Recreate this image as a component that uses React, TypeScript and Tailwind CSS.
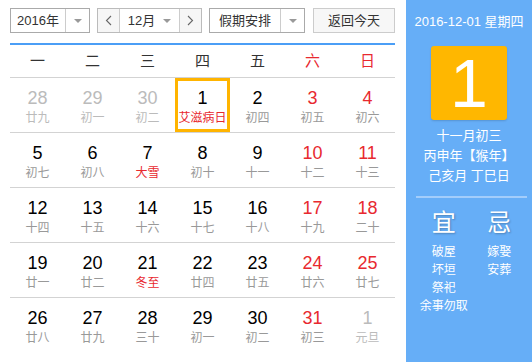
import React from "react";

type Day = {
  n: number;
  lunar: string;
  other?: boolean;
  weekend?: boolean;
  fest?: boolean;
  selected?: boolean;
};

const WEEKDAYS = ["一", "二", "三", "四", "五", "六", "日"];

const ROWS: Day[][] = [
  [
    { n: 28, lunar: "廿九", other: true },
    { n: 29, lunar: "初一", other: true },
    { n: 30, lunar: "初二", other: true },
    { n: 1, lunar: "艾滋病日", fest: true, selected: true },
    { n: 2, lunar: "初四" },
    { n: 3, lunar: "初五", weekend: true },
    { n: 4, lunar: "初六", weekend: true },
  ],
  [
    { n: 5, lunar: "初七" },
    { n: 6, lunar: "初八" },
    { n: 7, lunar: "大雪", fest: true },
    { n: 8, lunar: "初十" },
    { n: 9, lunar: "十一" },
    { n: 10, lunar: "十二", weekend: true },
    { n: 11, lunar: "十三", weekend: true },
  ],
  [
    { n: 12, lunar: "十四" },
    { n: 13, lunar: "十五" },
    { n: 14, lunar: "十六" },
    { n: 15, lunar: "十七" },
    { n: 16, lunar: "十八" },
    { n: 17, lunar: "十九", weekend: true },
    { n: 18, lunar: "二十", weekend: true },
  ],
  [
    { n: 19, lunar: "廿一" },
    { n: 20, lunar: "廿二" },
    { n: 21, lunar: "冬至", fest: true },
    { n: 22, lunar: "廿四" },
    { n: 23, lunar: "廿五" },
    { n: 24, lunar: "廿六", weekend: true },
    { n: 25, lunar: "廿七", weekend: true },
  ],
  [
    { n: 26, lunar: "廿八" },
    { n: 27, lunar: "廿九" },
    { n: 28, lunar: "三十" },
    { n: 29, lunar: "初一" },
    { n: 30, lunar: "初二" },
    { n: 31, lunar: "初三", weekend: true },
    { n: 1, lunar: "元旦", other: true },
  ],
];

function Caret() {
  return (
    <span className="w-0 h-0 border-x-[4px] border-x-transparent border-t-[4px] border-t-[#999]" />
  );
}

function DayCell({ d }: { d: Day }) {
  const numColor = d.other ? "text-[#bbb]" : d.weekend ? "text-[#e8292f]" : "text-black";
  const lunarColor = d.other ? "text-[#bbb]" : d.fest ? "text-[#e8292f]" : "text-[#999]";
  return (
    <div
      className={`flex flex-col items-center pt-[9px] ${
        d.selected ? "shadow-[inset_0_0_0_3px_#ffb400]" : ""
      }`}
    >
      <span className={`text-[18px] leading-[22px] ${numColor}`}>{d.n}</span>
      <span className={`text-[12px] leading-[18px] ${lunarColor}`}>{d.lunar}</span>
    </div>
  );
}

export default function App() {
  return (
    <div
      className="w-[532px] h-[362px] flex overflow-hidden bg-white"
      style={{ fontFamily: '"Liberation Sans", Arial, "Noto Sans CJK SC", sans-serif' }}
    >
      {/* Calendar body */}
      <div className="w-[406px] pl-[10px] pr-[11px] pt-[8px]">
        {/* Toolbar */}
        <div className="flex h-[25px] text-[13px] text-[#333]">
          <div className="w-[80px] flex border border-[#aaa] bg-white">
            <span className="w-[55px] flex items-center justify-center border-r border-[#ccc]">2016年</span>
            <span className="flex-1 flex items-center justify-center">
              <Caret />
            </span>
          </div>
          <div className="ml-[7px] w-[105px] flex border border-[#bbb] bg-white">
            <span className="w-[22px] flex items-center justify-center bg-[#f6f6f6] border-r border-[#ccc] text-[#555]">
              <svg width="7" height="11" viewBox="0 0 7 11">
                <path d="M6 1 L1.5 5.5 L6 10" fill="none" stroke="#666" strokeWidth="1.1" />
              </svg>
            </span>
            <span className="w-[60px] flex items-center justify-center gap-[8px] border-r border-[#ccc]">
              12月
              <Caret />
            </span>
            <span className="flex-1 flex items-center justify-center bg-[#f6f6f6]">
              <svg width="7" height="11" viewBox="0 0 7 11">
                <path d="M1 1 L5.5 5.5 L1 10" fill="none" stroke="#666" strokeWidth="1.1" />
              </svg>
            </span>
          </div>
          <div className="ml-[7px] w-[96px] flex border border-[#aaa] bg-white">
            <span className="w-[71px] flex items-center justify-center border-r border-[#ccc]">假期安排</span>
            <span className="flex-1 flex items-center justify-center">
              <Caret />
            </span>
          </div>
          <div className="ml-[8px] w-[82px] flex items-center justify-center border border-[#ccc] bg-[#f7f7f7]">
            返回今天
          </div>
        </div>

        <div className="mt-[10px] h-[2px] bg-[#4b9ef6]" />

        {/* Weekday header */}
        <div className="grid grid-cols-7 h-[33px] items-center border-b border-[#d3d3d3] text-[15px] text-[#333]">
          {WEEKDAYS.map((w, i) => (
            <span key={w} className={`text-center ${i >= 5 ? "text-[#e8292f]" : ""}`}>
              {w}
            </span>
          ))}
        </div>

        {/* Days */}
        {ROWS.map((row, r) => (
          <div
            key={r}
            className={`grid grid-cols-7 h-[55px] ${r < ROWS.length - 1 ? "border-b border-[#d3d3d3]" : ""}`}
          >
            {row.map((d, i) => (
              <DayCell key={i} d={d} />
            ))}
          </div>
        ))}
      </div>

      {/* Side panel */}
      <div className="flex-1 bg-[#66aef7] text-white flex flex-col items-center">
        <div className="mt-[13px] text-[13px] leading-[18px]">2016-12-01 星期四</div>
        <div className="mt-[15px] w-[76px] h-[74px] rounded-[3px] bg-[#ffb700] flex items-center justify-center text-[68px] leading-none shadow-[0_1px_2px_rgba(0,0,0,0.15)]">
          1
        </div>
        <div className="mt-[6px] text-[13px] leading-[20px] text-center">
          <div>十一月初三</div>
          <div>丙申年【猴年】</div>
          <div>己亥月 丁巳日</div>
        </div>
        <div className="mt-[10px] self-stretch ml-[10px] mr-[5px] h-[2px] bg-[#a3cdfb]" />
        <div className="mt-[10px] self-stretch ml-[10px] mr-[5px] grid grid-cols-2">
          <div className="flex flex-col items-center">
            <span className="text-[24px] leading-[30px] [text-shadow:1px_1px_2px_rgba(0,0,0,0.25)]">宜</span>
            <div className="mt-[5px] flex flex-col items-center text-[12px] leading-[18px]">
              <span>破屋</span>
              <span>坏垣</span>
              <span>祭祀</span>
              <span>余事勿取</span>
            </div>
          </div>
          <div className="flex flex-col items-center">
            <span className="text-[24px] leading-[30px] [text-shadow:1px_1px_2px_rgba(0,0,0,0.25)]">忌</span>
            <div className="mt-[5px] flex flex-col items-center text-[12px] leading-[18px]">
              <span>嫁娶</span>
              <span>安葬</span>
            </div>
          </div>
        </div>
      </div>
    </div>
  );
}
